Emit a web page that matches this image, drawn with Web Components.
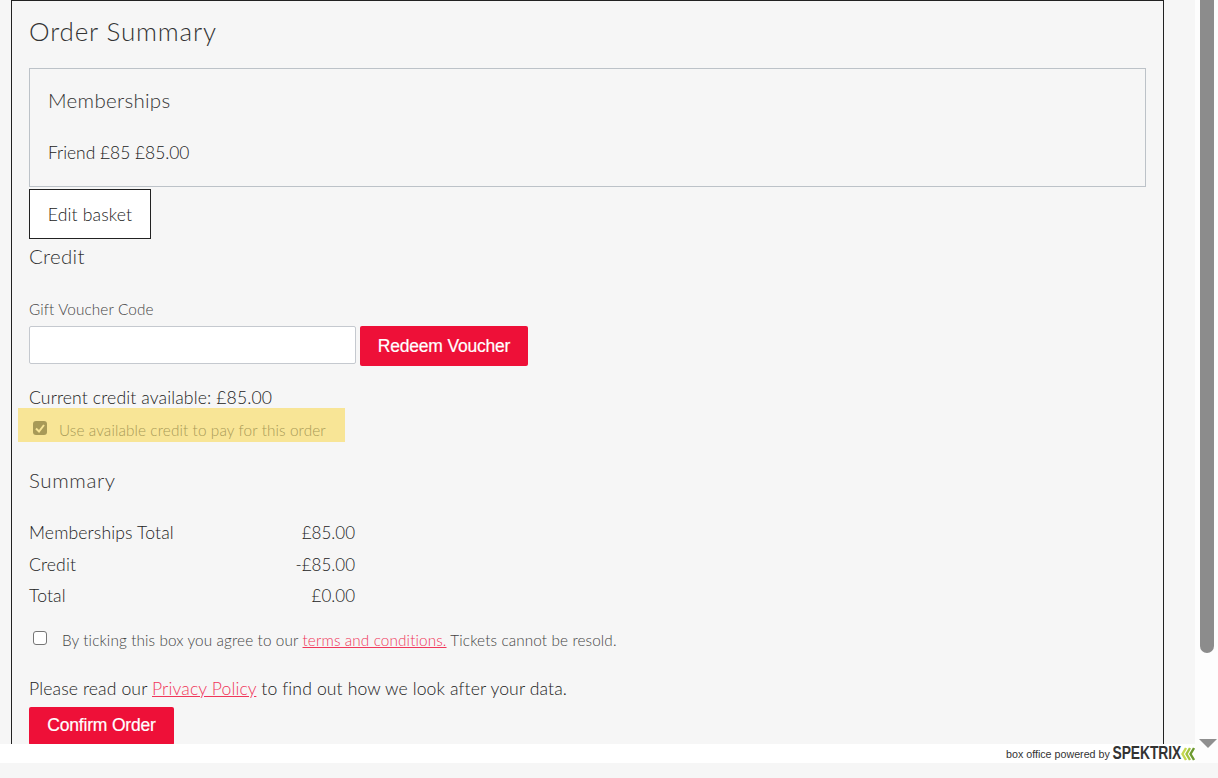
<!DOCTYPE html>
<html lang="en"><head><meta charset="utf-8"><title>Order Summary</title>
<style>
html,body{margin:0;height:100%;overflow:hidden;background:#f6f6f6}
body{font-family:Lato,"Liberation Sans",sans-serif;color:#333}
</style></head><body>
<checkout-app></checkout-app>
<template id="t-app"><style>
:host{display:grid;grid-template-columns:1195px 23px;height:778px;background:#f6f6f6}
.main{display:grid;grid-template-rows:744px 19px 15px;min-width:0}
.view{overflow:hidden;padding-left:11px;background:#f6f6f6}
.frame{width:1153px;height:800px;border:1px solid #222;border-bottom:0;padding:0 17px 0 17px;box-sizing:border-box;position:relative}
.rest{background:#f6f6f6}
</style>
<div class="main"><div class="view"><div class="frame"><slot></slot></div></div><powered-by></powered-by><div class="rest"></div></div>
<fake-scrollbar></fake-scrollbar></template>

<template id="t-sb"><style>
:host{display:flex;flex-direction:column;background:#fdfdfd;padding-left:5px;box-sizing:border-box;height:763px;position:relative}
.thumb{width:14px;height:653px;background:#8c8c8c;border-radius:0 0 7px 7px}
.gap{flex:1}
svg{display:block;margin:0 0 15px -1px}
</style><div class="thumb"></div><div class="gap"></div><svg width="18" height="9" viewBox="0 0 18 9"><path d="M0 0H18L9 9Z" fill="#8f8f8f"/></svg></template>

<template id="t-pow"><style>
:host{display:flex;align-items:center;justify-content:flex-end;background:#fff;gap:3px;overflow:hidden}
.t{font:10.700px "Liberation Sans",Arial,sans-serif;color:#333;margin-top:1px}
.s{font:700 18px/19px "Liberation Sans",Arial,sans-serif;color:#333;transform:scaleX(.77);transform-origin:right center;margin-left:-21px;letter-spacing:-.1px}
svg{display:block;margin-left:-3px}
</style><span class="t">box office powered by</span><span class="s">SPEKTRIX</span><svg width="14" height="14" viewBox="0 0 14 14"><g fill="none" stroke-width="2.400"><path d="M5 1 1.500 7 5 13" stroke="#c5d84f"/><path d="M9 1 5.500 7 9 13" stroke="#a3c43f"/><path d="M13 1 9.500 7 13 13" stroke="#6d9a30"/></g></svg></template>

<template id="t-title"><style>
:host{display:block;font-size:var(--fs,25px);line-height:var(--lh,30px);font-weight:300;color:#333;letter-spacing:var(--ls,.3px)}
</style><slot></slot></template>

<template id="t-box"><style>
:host{display:block;border:1px solid #bcc2c8;height:119px;box-sizing:border-box;padding:18px 18px 0;margin-top:22px;margin-bottom:2px}
</style><slot></slot></template>

<template id="t-btn"><style>
:host{display:inline-flex;align-items:center;justify-content:center;box-sizing:border-box;font-size:17.600px;font-weight:300;letter-spacing:.15px}
:host([kind=outline]){background:#fff;border:1px solid #222;color:#222;width:122px;height:50px}
:host([kind=red]){background:#ee1038;color:#fff;border-radius:2px;font:17.500px "Liberation Sans",Arial,sans-serif;height:40px;letter-spacing:-.2px;-webkit-text-stroke:.2px #fff}
</style><slot></slot></template>

<template id="t-check"><style>
:host{display:flex;align-items:center;font-size:var(--fs,15.300px);color:var(--c,#444);font-weight:300;letter-spacing:.12px}
.b{width:14px;height:14px;box-sizing:border-box;border-radius:3px;border:1px solid #767676;background:#fff;flex:none;margin-left:4px;margin-top:-4px;margin-right:var(--g,12px);display:block}
:host([checked]) .b{border:0;background:#a89a57}
svg{display:block}
</style><span class="b" id="b"><svg id="k" width="14" height="14" viewBox="0 0 14 14"><path d="M3 7.500 6 10.500 11 4" fill="none" stroke="#f8e596" stroke-width="2"/></svg></span><span><slot></slot></span></template>

<template id="t-row"><style>
:host{display:flex;justify-content:space-between;width:326px;height:31.600px;align-items:center;font-size:17.600px;color:#222;font-weight:300;letter-spacing:.13px}
::slotted([slot=v]){font-size:17px;letter-spacing:0}
</style><slot></slot><slot name="v"></slot></template>

<template id="t-order"><style>
:host{display:block;font-size:17.600px;color:#222;font-weight:300}
a{color:#f0375a;text-decoration:underline}
.l{height:26px;line-height:26px;position:relative;letter-spacing:.12px}
.vc{display:flex;gap:4px}
.inp{width:327px;height:38px;box-sizing:border-box;background:#fff;border:1px solid #c5c9cf;border-radius:2px}
.hl{background:#f8e596;width:327px;height:34px;margin:-3px 0 0 -11px;--c:#a89a57;box-sizing:border-box;padding:10px 0 0 11px;font-size:15.300px}
</style>
<section-title style="--ls:.85px;--fs:26px;margin-top:15px">Order Summary</section-title>
<summary-box><section-title style="--fs:20.500px;--lh:26px">Memberships</section-title><div style="margin-top:27px;height:26px;line-height:26px;font-size:17.400px">Friend £85 £85.00</div></summary-box>
<ui-btn kind="outline">Edit basket</ui-btn>
<section-title style="--fs:20.500px;--lh:26px;margin-top:4px">Credit</section-title>
<div style="font-size:15.300px;color:#444;height:20px;line-height:20px;margin-top:30px;letter-spacing:.12px">Gift Voucher Code</div>
<div class="vc" style="margin-top:7px"><div class="inp"></div><ui-btn kind="red" style="width:168px">Redeem Voucher</ui-btn></div>
<div class="l" style="margin-top:19px">Current credit available: £85.00</div>
<check-line class="hl" checked>Use available credit to pay for this order</check-line>
<section-title style="--fs:20.500px;--lh:26px;--ls:.6px;margin-top:25px">Summary</section-title>
<div style="margin-top:24px">
<total-row>Memberships Total<span slot="v">£85.00</span></total-row>
<total-row>Credit<span slot="v">-£85.00</span></total-row>
<total-row>Total<span slot="v">£0.00</span></total-row>
</div>
<check-line style="margin-top:17px;height:22px;--g:15px"><span>By ticking this box you agree to our <a href="#">terms and conditions.</a> Tickets cannot be resold.</span></check-line>
<div class="l" style="margin-top:25px">Please read our <a href="#">Privacy Policy</a> to find out how we look after your data.</div>
<ui-btn kind="red" style="width:145px;height:38px;margin-top:5px;display:flex">Confirm Order</ui-btn>
</template>
<script>
function def(n,t,init){customElements.define(n,class extends HTMLElement{constructor(){super();const s=this.attachShadow({mode:'open'});s.appendChild(document.getElementById(t).content.cloneNode(true));if(init)init(s,this)}})}
def('powered-by','t-pow');def('fake-scrollbar','t-sb');def('section-title','t-title');def('summary-box','t-box');def('ui-btn','t-btn');
def('check-line','t-check',(s,h)=>{if(!h.hasAttribute('checked'))s.getElementById('k').style.display='none'});
def('total-row','t-row');def('order-summary','t-order');def('checkout-app','t-app');
document.querySelector('checkout-app').appendChild(document.createElement('order-summary'));
</script>
</body></html>
